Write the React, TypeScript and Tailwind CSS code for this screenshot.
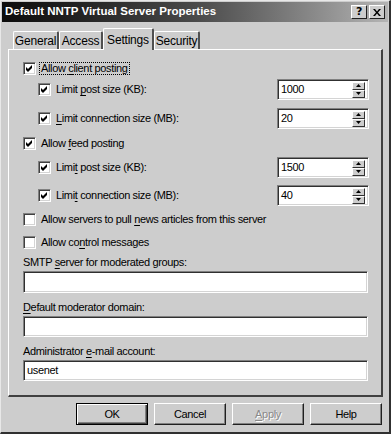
import React from 'react';

const font = { fontFamily: '"Liberation Sans", Arial, sans-serif' };

const Check: React.FC<{ checked?: boolean }> = ({ checked }) => (
  <div className="w-[13px] h-[13px] shrink-0 bg-white border-t border-l border-t-[#808080] border-l-[#808080] border-b border-r border-b-white border-r-white shadow-[inset_1px_1px_0_#404040,inset_-1px_-1px_0_#d4d4d4] flex items-center justify-center">
    {checked && (
      <svg width="7" height="7" viewBox="0 0 7 7" className="block">
        <path d="M0 2 L2 4 L6 0 L6 3 L2 7 L0 5 Z" fill="#000" />
      </svg>
    )}
  </div>
);

const Sunken: React.FC<{ className?: string; children?: React.ReactNode }> = ({ className = '', children }) => (
  <div
    className={
      'bg-white border-t border-l border-t-[#808080] border-l-[#808080] border-b border-r border-b-white border-r-white shadow-[inset_1px_1px_0_#303030,inset_-1px_-1px_0_#d4d4d4] flex items-center ' +
      className
    }
  >
    {children}
  </div>
);

const SpinBtn: React.FC<{ up?: boolean }> = ({ up }) => (
  <div className="w-[13px] h-[8px] bg-[#cdcdcd] border-t border-l border-t-white border-l-white border-b border-r border-b-[#303030] border-r-[#303030] flex items-center justify-center">
    <svg width="5" height="3" viewBox="0 0 5 3" className="block">
      {up ? <path d="M2.5 0 L5 3 L0 3 Z" fill="#000" /> : <path d="M0 0 L5 0 L2.5 3 Z" fill="#000" />}
    </svg>
  </div>
);

const Spin: React.FC<{ value: string }> = ({ value }) => (
  <Sunken className="w-[92px] h-[21px] justify-between pl-[3px] pr-[3px]">
    <span>{value}</span>
    <div className="flex flex-col">
      <SpinBtn up />
      <SpinBtn />
    </div>
  </Sunken>
);

const U: React.FC<{ children: React.ReactNode }> = ({ children }) => <span className="underline underline-offset-[2px]">{children}</span>;

const SubRow: React.FC<{ label: React.ReactNode; value: string; className?: string }> = ({ label, value, className = '' }) => (
  <div className={'flex items-center h-[21px] pl-[15px] ' + className}>
    <Check checked />
    <span className="ml-[5px] flex-1">{label}</span>
    <Spin value={value} />
  </div>
);

const Btn: React.FC<{ children: React.ReactNode; def?: boolean; disabled?: boolean }> = ({ children, def, disabled }) => (
  <div
    className={
      'w-[72px] h-[22px] flex items-center justify-center bg-[#cdcdcd] ' +
      (def
        ? 'border border-black shadow-[inset_1px_1px_0_#fff,inset_-1px_-1px_0_#404040,inset_-2px_-2px_0_#808080]'
        : 'border-t border-l border-t-white border-l-white border-b border-r border-b-[#202020] border-r-[#202020] shadow-[inset_-1px_-1px_0_#808080]')
    }
  >
    <span className={disabled ? 'text-[#8a8a8a] [text-shadow:1px_1px_0_#fff]' : 'text-black'}>{children}</span>
  </div>
);

const Tab: React.FC<{ label: string; active?: boolean; w: string }> = ({ label, active, w }) => (
  <div
    className={
      'flex items-center justify-center bg-[#cdcdcd] border-t border-l border-t-white border-l-white border-r-2 border-r-[#505050] rounded-t-[2px] ' +
      w +
      (active ? ' h-[22px] -mb-px relative z-10' : ' h-[18px]')
    }
  >
    {label}
  </div>
);

export default function App() {
  return (
    <div
      className="w-[391px] h-[434px] bg-[#cdcdcd] text-[11px] tracking-[-0.35px] text-black border-l border-t border-l-[#e8e8e8] border-t-[#e8e8e8] border-r-2 border-b-2 border-r-[#303030] border-b-[#303030] overflow-hidden"
      style={font}
    >
      {/* title bar */}
      <div className="mx-[1px] mt-[1px] h-[20px] flex items-center bg-gradient-to-r from-[#0c0c0c] via-[#4a4a4a] to-[#b4b4b4] pl-[3px] pr-[3px]">
        <span className="text-white font-bold text-[11.5px] tracking-[0px] flex-1">Default NNTP Virtual Server Properties</span>
        <div className="flex gap-[2px]">
          <div className="w-[16px] h-[14px] bg-[#cdcdcd] border-t border-l border-t-white border-l-white border-b border-r border-b-[#202020] border-r-[#202020] flex items-center justify-center font-bold text-[11px]" style={{ fontFamily: '"DejaVu Sans", sans-serif' }}>
            ?
          </div>
          <div className="w-[16px] h-[14px] bg-[#cdcdcd] border-t border-l border-t-white border-l-white border-b border-r border-b-[#202020] border-r-[#202020] flex items-center justify-center">
            <svg width="8" height="7" viewBox="0 0 8 7">
              <path d="M0 0 L2 0 L4 2.5 L6 0 L8 0 L5 3.5 L8 7 L6 7 L4 4.5 L2 7 L0 7 L3 3.5 Z" fill="#000" />
            </svg>
          </div>
        </div>
      </div>

      {/* tabs */}
      <div className="flex items-end pl-[12px] mt-[5px] h-[22px] text-[12px] tracking-[-0.2px]">
        <Tab label="General" w="w-[46px]" />
        <Tab label="Access" w="w-[44px]" />
        <Tab label="Settings" w="w-[51px]" active />
        <Tab label="Security" w="w-[46px]" />
      </div>

      {/* panel */}
      <div className="ml-[7px] w-[375px] border-t border-l border-t-white border-l-white border-r-2 border-b-2 border-r-[#404040] border-b-[#404040] pl-[14px] pr-[12px] pt-[12px] pb-[14px]">
        <div className="flex items-center h-[13px]">
          <Check checked />
          <span className="ml-[3px] px-[1px] border border-dotted border-black leading-[11px]">
            Allow <U>c</U>lient posting
          </span>
        </div>
        <SubRow className="mt-[4px]" label={<>Limit <U>p</U>ost size (KB):</>} value="1000" />
        <SubRow className="mt-[8px]" label={<><U>L</U>imit connection size (MB):</>} value="20" />

        <div className="flex items-center h-[13px] mt-[8px]">
          <Check checked />
          <span className="ml-[5px]">
            Allow <U>f</U>eed posting
          </span>
        </div>
        <SubRow className="mt-[7px]" label={<>Limi<U>t</U> post size (KB):</>} value="1500" />
        <SubRow className="mt-[7px]" label={<>Limi<U>t</U> connection size (MB):</>} value="40" />

        <div className="flex items-center h-[13px] mt-[7px]">
          <Check />
          <span className="ml-[5px]">
            Allow servers to pull <U>n</U>ews articles from this server
          </span>
        </div>
        <div className="flex items-center h-[13px] mt-[10px]">
          <Check />
          <span className="ml-[5px]">
            Allow co<U>n</U>trol messages
          </span>
        </div>

        <div className="h-[13px] mt-[7px] flex items-center">
          <span>
            SMTP <U>s</U>erver for moderated groups:
          </span>
        </div>
        <Sunken className="mt-[2px] w-[345px] h-[22px]" />

        <div className="h-[13px] mt-[8px] flex items-center">
          <span>
            <U>D</U>efault moderator domain:
          </span>
        </div>
        <Sunken className="mt-[2px] w-[345px] h-[21px]" />

        <div className="h-[13px] mt-[8px] flex items-center">
          <span>
            Administrator <U>e</U>-mail account:
          </span>
        </div>
        <Sunken className="mt-[2px] w-[345px] h-[21px] pl-[3px]">
          <span>usenet</span>
        </Sunken>
      </div>

      {/* buttons */}
      <div className="flex justify-end gap-[6px] mt-[6px] pr-[7px]">
        <Btn def>OK</Btn>
        <Btn>Cancel</Btn>
        <Btn disabled>
          <U>A</U>pply
        </Btn>
        <Btn>Help</Btn>
      </div>
    </div>
  );
}
